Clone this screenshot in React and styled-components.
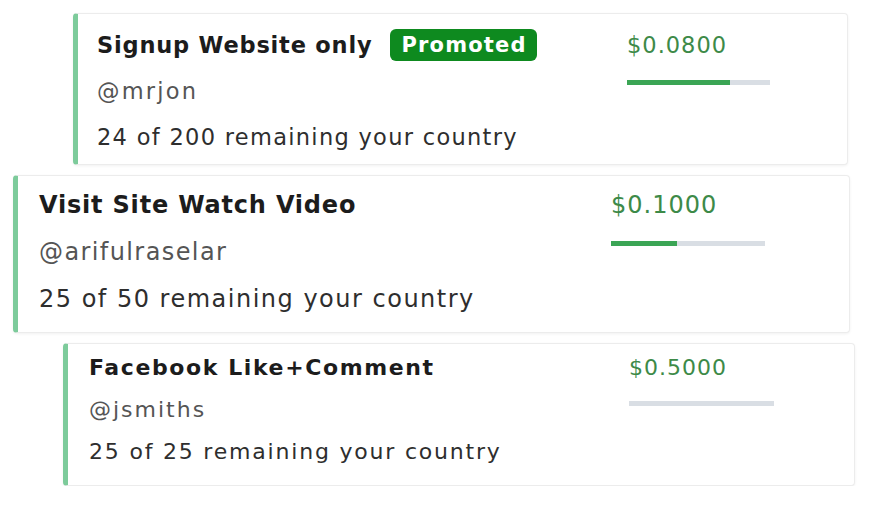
import React from 'react';
import styled, { createGlobalStyle } from 'styled-components';

const GlobalStyle = createGlobalStyle`
  body {
    margin: 0;
    background: #ffffff;
    font-family: 'DejaVu Sans', 'Open Sans', sans-serif;
  }
`;

const List = styled.div`
  display: flex;
  flex-direction: column;
  gap: 10px;
  padding-top: 13px;
`;

const Card = styled.div`
  display: flex;
  justify-content: space-between;
  box-sizing: border-box;
  margin-left: ${p => p.$indent}px;
  width: ${p => p.$width}px;
  padding: ${p => p.$pt}px ${p => p.$pr}px ${p => p.$pb}px ${p => p.$pl}px;
  background: #fff;
  border: 1px solid #ececec;
  border-left: 5px solid #7dcb9b;
  border-radius: 4px;
  box-shadow: 0 1px 3px rgba(0, 0, 0, 0.06);
  font-size: ${p => p.$size}px;
  line-height: ${p => p.$line}px;
  letter-spacing: ${p => p.$ls}px;
`;

const Info = styled.div`
  display: flex;
  flex-direction: column;
`;

const TitleRow = styled.div`
  display: flex;
  align-items: center;
  gap: 18px;
`;

const Title = styled.span`
  font-weight: 700;
  color: #1c1c1c;
  letter-spacing: ${p => p.$ls}px;
`;

const Badge = styled.span`
  display: inline-flex;
  align-items: center;
  height: 32px;
  padding: 0 10px 0 11px;
  border-radius: 6px;
  background: #0e8a1f;
  color: #fff;
  font-weight: 700;
  font-size: 21px;
  letter-spacing: 1.2px;
  line-height: 32px;
`;

const Handle = styled.span`
  color: #555;
  letter-spacing: ${p => p.$ls}px;
`;

const Remaining = styled.span`
  color: #2e2e2e;
`;

const PriceCol = styled.div`
  display: flex;
  flex-direction: column;
  width: ${p => p.$w}px;
`;

const Price = styled.span`
  color: #3d8a48;
  letter-spacing: 1px;
`;

const Track = styled.div`
  margin-top: 12px;
  height: 5px;
  background: #d9dee4;
`;

const Fill = styled.div`
  height: 100%;
  background: #3ba555;
`;

const tasks = [
  {
    title: 'Signup Website only', promoted: true, handle: '@mrjon',
    left: '24 of 200 remaining your country', price: '$0.0800', pct: 72,
    indent: 73, width: 775, pt: 8, pb: 4, pl: 19, pr: 77, size: 22.5, line: 46, colW: 143,
    ls: 1.3, tls: 0.8, hls: 2.2,
  },
  {
    title: 'Visit Site Watch Video', handle: '@arifulraselar',
    left: '25 of 50 remaining your country', price: '$0.1000', pct: 43,
    indent: 13, width: 837, pt: 6, pb: 9, pl: 21, pr: 84, size: 24, line: 47, colW: 154,
    ls: 1.5, tls: 0.8, hls: 1.4,
  },
  {
    title: 'Facebook Like+Comment', handle: '@jsmiths',
    left: '25 of 25 remaining your country', price: '$0.5000', pct: 0,
    indent: 63, width: 792, pt: 3, pb: 12, pl: 21, pr: 80, size: 22, line: 42, colW: 145,
    ls: 1.8, tls: 1.6, hls: 2,
  },
];

const App = () => (
  <>
    <GlobalStyle />
    <List>
      {tasks.map(t => (
        <Card
          key={t.title}
          $indent={t.indent}
          $width={t.width}
          $pt={t.pt}
          $pb={t.pb}
          $pl={t.pl}
          $pr={t.pr}
          $size={t.size}
          $line={t.line}
          $ls={t.ls}
        >
          <Info>
            <TitleRow>
              <Title $ls={t.tls}>{t.title}</Title>
              {t.promoted && <Badge>Promoted</Badge>}
            </TitleRow>
            <Handle $ls={t.hls}>{t.handle}</Handle>
            <Remaining>{t.left}</Remaining>
          </Info>
          <PriceCol $w={t.colW}>
            <Price>{t.price}</Price>
            <Track>
              <Fill style={{ width: `${t.pct}%` }} />
            </Track>
          </PriceCol>
        </Card>
      ))}
    </List>
  </>
);

export default App;
